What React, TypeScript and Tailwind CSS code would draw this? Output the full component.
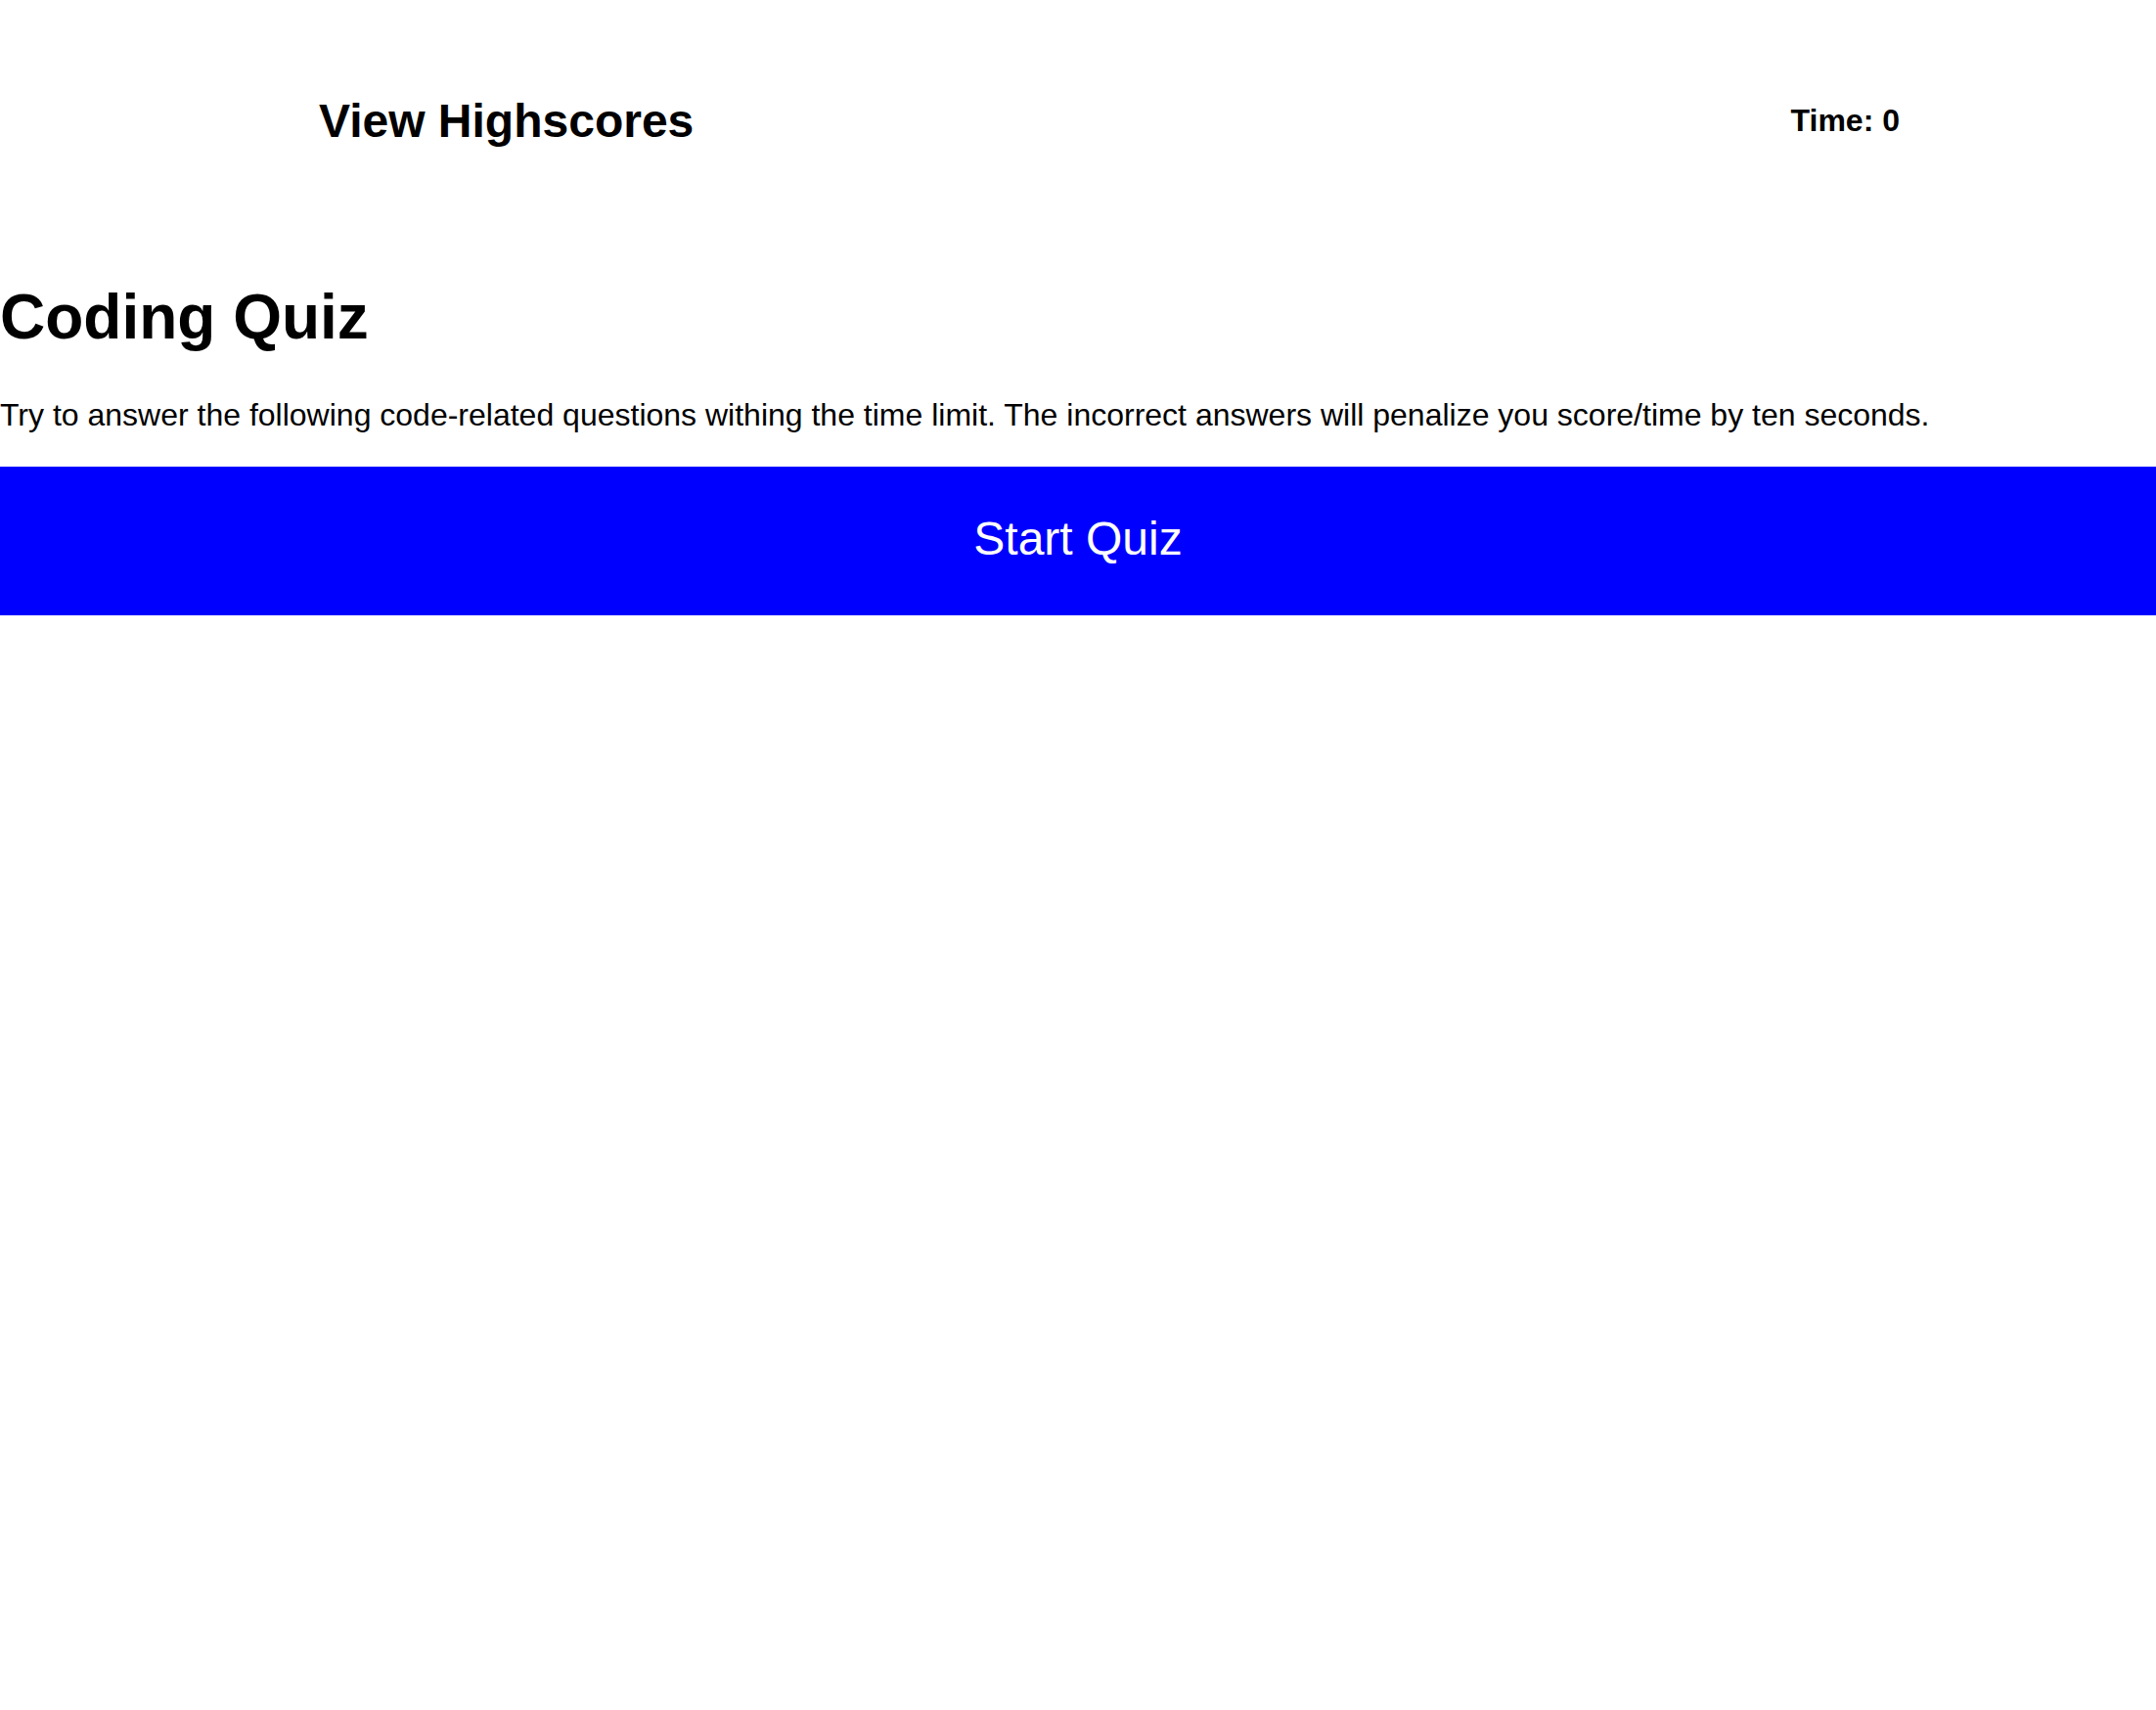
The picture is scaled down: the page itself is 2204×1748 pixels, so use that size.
export default function App() {
  return (
    <div className="min-h-[1748px] bg-white text-black" style={{ fontFamily: '"Liberation Sans", Arial, sans-serif' }}>
      {/* header */}
      <header className="flex items-center justify-between pl-[326px] pr-[262px] pt-[96px]">
        <h2 className="text-[48px] font-bold leading-[55px]">View Highscores</h2>
        <div className="text-[32px] font-bold leading-[37px]">Time: 0</div>
      </header>

      <main className="pt-[136px]">
        <h1 className="text-[64px] font-bold leading-[74px]">Coding Quiz</h1>
        <p className="mt-[45px] text-[32px] leading-[37px]">
          Try to answer the following code-related questions withing the time limit. The incorrect answers will penalize you score/time by ten seconds.
        </p>
        <button className="mt-[34px] block h-[152px] w-full bg-[#0000ff] pb-[6px] text-[48px] leading-[55px] text-white">
          Start Quiz
        </button>
      </main>
    </div>
  );
}
